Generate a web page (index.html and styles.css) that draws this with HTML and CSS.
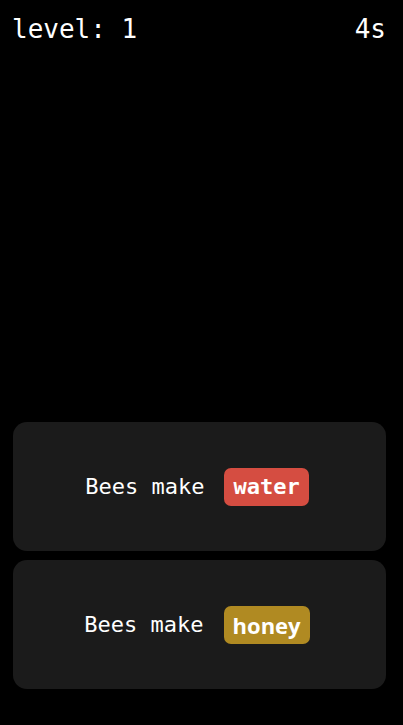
FILE: index.html
```html
<!DOCTYPE html>
<html>
<head>
<meta charset="utf-8">
<link rel="stylesheet" href="styles.css">
</head>
<body>
<div class="app">
  <header class="top">
    <span>level: 1</span>
    <span>4s</span>
  </header>
  <main class="spacer"></main>
  <section class="options">
    <div class="card">
      <span class="phrase">Bees make</span>
      <span class="badge red">water</span>
    </div>
    <div class="card">
      <span class="phrase">Bees make</span>
      <span class="badge gold">honey</span>
    </div>
  </section>
</div>
</body>
</html>
```
FILE: styles.css
```css
html, body {
  margin: 0;
  padding: 0;
  background: #000;
  color: #fff;
  font-family: "DejaVu Sans Mono", "Liberation Mono", monospace;
}
.app {
  height: 725px;
  display: flex;
  flex-direction: column;
  box-sizing: border-box;
  padding: 0 17px 36px 13px;
}
.top {
  display: flex;
  justify-content: space-between;
  font-size: 26px;
  line-height: 30px;
  padding: 14px 0 0 0;
  margin: 0 0 0 -1px;
}
.spacer {
  flex: 1;
}
.options {
  display: flex;
  flex-direction: column;
  gap: 9px;
}
.card {
  height: 129px;
  background: #1b1b1b;
  border-radius: 14px;
  display: flex;
  align-items: center;
  justify-content: center;
  gap: 20px;
  font-size: 22px;
  padding-right: 5px;
}
.phrase {
  line-height: 24px;
}
.badge {
  display: inline-block;
  height: 38px;
  line-height: 38px;
  padding: 0 9px;
  border-radius: 7px;
  font-weight: bold;
}
.red {
  background: #d54d41;
}
.gold {
  background: #b08a22;
  font-family: "Open Sans", "Noto Sans", sans-serif;
}
```
